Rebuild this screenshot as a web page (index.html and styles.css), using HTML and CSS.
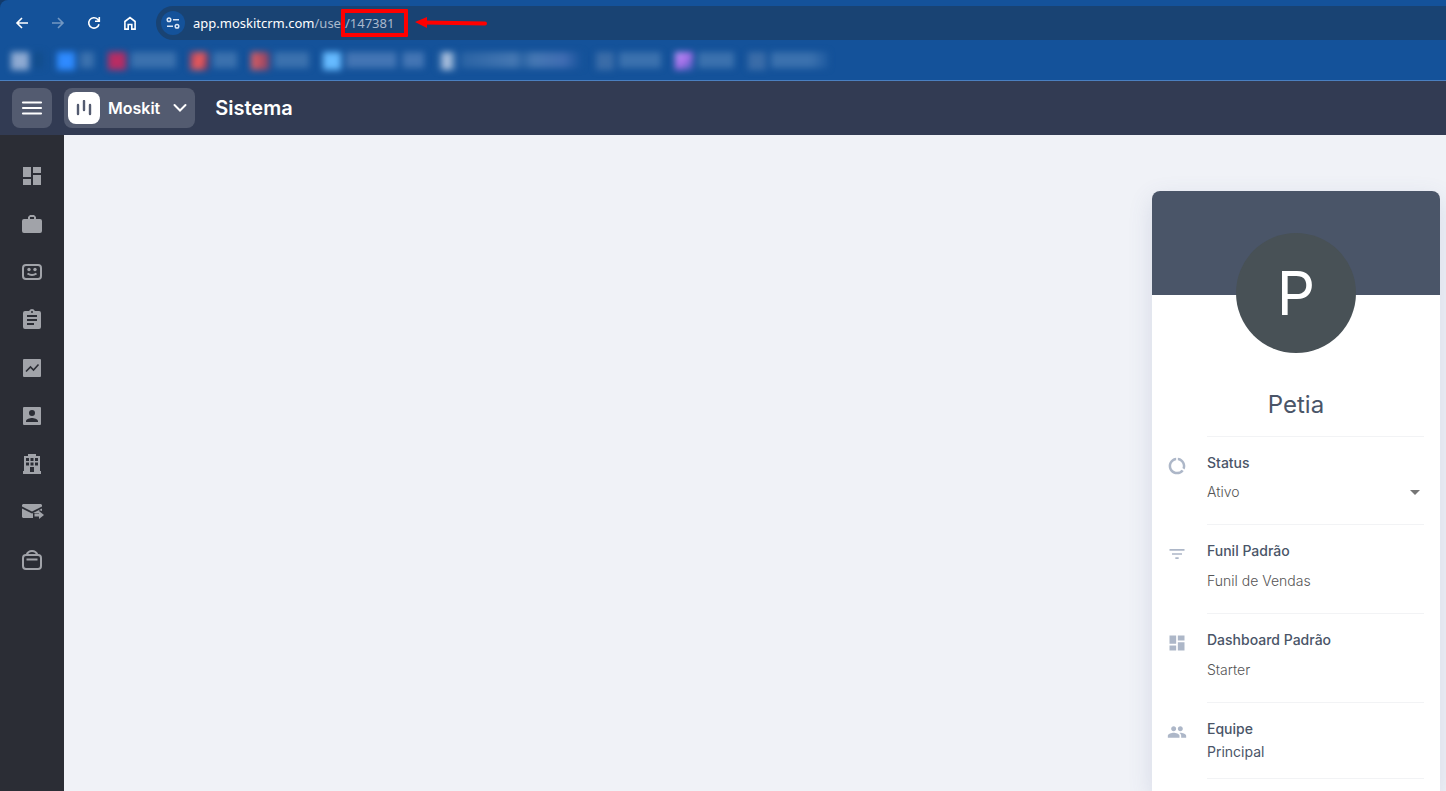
FILE: index.html
```html
<!DOCTYPE html>
<html lang="pt-BR">
<head>
    <meta charset="UTF-8">
    <title>Moskit - Sistema</title>
    <link rel="stylesheet" href="styles.css">
</head>
<body>
    <!-- browser bar -->
    <div class="browser">
        <div class="toolbar">
            <button class="nav-button" aria-label="Back">
                <svg viewBox="0 0 16 16"><path d="M14 8H3M8 3L3 8l5 5"/></svg>
            </button>
            <button class="nav-button disabled" aria-label="Forward" disabled>
                <svg viewBox="0 0 16 16"><path d="M2 8h11M8 3l5 5-5 5"/></svg>
            </button>
            <button class="nav-button" aria-label="Reload">
                <svg viewBox="0 0 16 16"><path d="M13 9.2A5.2 5.2 0 1 1 11.7 4.300L13 5.700M13.300 2v4.200H9"/></svg>
            </button>
            <button class="nav-button" aria-label="Home">
                <svg viewBox="0 0 16 16"><path d="M2.900 6.500L8 2.500l5.100 4v7.600H9.800V9.500H6.200v4.600H2.900z"/></svg>
            </button>
            <div class="address">
                <span class="site-info">
                    <svg viewBox="0 0 16 16"><circle cx="4" cy="4.700" r="1.800"/><path d="M8 4.700h6M2 11.200h6"/><circle cx="12" cy="11.200" r="1.800"/></svg>
                </span>
                <span class="url"><span class="host">app.moskitcrm.com</span>/use</span>
                <span class="user-id">/147381</span>
                <svg class="arrow" viewBox="0 0 74 12"><path class="line" d="M9 5.500l61 1"/><path class="head" d="M0 5L12 0v11z"/></svg>
            </div>
        </div>
        <div class="bookmarks">
            <span class="bookmark b1"><i></i><b></b></span>
            <span class="bookmark b2"><i></i><b></b></span>
            <span class="bookmark b3"><i></i><b></b></span>
            <span class="bookmark b4"><i></i><b></b></span>
            <span class="bookmark b5"><i></i><b></b></span>
            <span class="bookmark b6"><i></i><b></b></span>
            <span class="bookmark b7"><i></i><b></b></span>
            <span class="bookmark b8"><i></i><b></b></span>
            <span class="bookmark b9"><i></i><b></b></span>
            <span class="bookmark b10"><i></i><b></b></span>
        </div>
    </div>

    <header class="header">
        <button class="menu-button" aria-label="Menu">
            <svg viewBox="0 0 24 24"><path d="M3 6.500h18M3 12h18M3 17.500h18"/></svg>
        </button>
        <button class="brand">
            <span class="logo">
                <svg viewBox="0 0 16 16"><path d="M2 5v9M8 1v9M14 5v9"/></svg>
            </span>
            Moskit
            <svg class="chevron" viewBox="0 0 16 16"><path d="M2.500 5L8 10.500 13.500 5"/></svg>
        </button>
        <h1 class="title">Sistema</h1>
    </header>

    <div class="page">
        <nav class="sidebar">
            <a href="#" aria-label="Dashboard"><svg viewBox="0 0 24 24"><path d="M3 13h8V3H3v10zm0 8h8v-6H3v6zm10 0h8V11h-8v10zm0-18v6h8V3h-8z"/></svg></a>
            <a href="#" aria-label="Negócios"><svg viewBox="0 0 24 24"><path d="M20 7h-4V5l-2-2h-4L8 5v2H4a2 2 0 0 0-2 2v10a2 2 0 0 0 2 2h16a2 2 0 0 0 2-2V9a2 2 0 0 0-2-2zM10 7V5h4v2z"/></svg></a>
            <a href="#" aria-label="Contatos"><svg viewBox="0 0 24 24"><rect class="stroke" x="3" y="5" width="18" height="14" rx="3"/><circle cx="9" cy="9.500" r="1.700"/><circle cx="15" cy="9.500" r="1.700"/><path class="stroke" d="M7.500 13.500q4.500 3.200 9 0"/></svg></a>
            <a href="#" aria-label="Atividades"><svg viewBox="0 0 24 24"><path d="M19 3h-4.180C14.400 1.840 13.300 1 12 1s-2.400.84-2.820 2H5a2 2 0 0 0-2 2v14a2 2 0 0 0 2 2h14a2 2 0 0 0 2-2V5a2 2 0 0 0-2-2zm-7 0a1 1 0 1 1 0 2 1 1 0 0 1 0-2zm2 14H7v-2h7v2zm3-4H7v-2h10v2zm0-4H7V7h10v2z"/></svg></a>
            <a href="#" aria-label="Relatórios"><svg viewBox="0 0 24 24"><rect x="3" y="3" width="18" height="18" rx="1"/><path class="cut" d="M6 15.500l4.500-4.500 3 3L18.500 8.500"/></svg></a>
            <a href="#" aria-label="Pessoas"><svg viewBox="0 0 24 24"><path d="M3 4v16a1 1 0 0 0 1 1h16a1 1 0 0 0 1-1V4a1 1 0 0 0-1-1H4a1 1 0 0 0-1 1zm12 5a3 3 0 1 1-6 0 3 3 0 0 1 6 0zm-9 8c0-2 4-3.100 6-3.100s6 1.100 6 3.100v1H6v-1z"/></svg></a>
            <a href="#" aria-label="Empresas"><svg viewBox="0 0 24 24"><path fill-rule="evenodd" d="M8 2h8v2h4v15h1v3H3v-3h1V4h4zM6 6v3h3V6zm4.500 0v3h3V6zM15 6v3h3V6zM6 10.500v3h3v-3zm4.500 0v3h3v-3zm4.500 0v3h3v-3zM10 15v5h4v-5z"/></svg></a>
            <a href="#" aria-label="E-mails"><svg viewBox="0 0 24 24"><path d="M2 5l1-1h18l1 1v1.500l-10 5-10-5zM2 8.500l10 5 10-5V11l-3-1v3h-6v5H3l-1-1zM14.500 13.500H19V11l5 4-5 4v-2.500h-4.500z"/></svg></a>
            <a href="#" aria-label="Loja"><svg viewBox="0 0 24 24"><rect class="stroke" x="3" y="7" width="18" height="14" rx="3"/><path class="stroke" d="M6.500 7Q8 3 12 3t5.500 4M6.500 11.500h11"/></svg></a>
        </nav>

        <main class="content">
            <section class="card">
                <div class="banner">
                    <div class="avatar">P</div>
                </div>
                <h2 class="name">Petia</h2>
                <div class="row status">
                    <svg viewBox="0 0 24 24"><path d="M13 2.050v3.030c3.390.49 6 3.390 6 6.920 0 .9-.18 1.750-.48 2.540l2.600 1.530c.56-1.240.88-2.620.88-4.070 0-5.180-3.950-9.450-9-9.950zM12 19c-3.870 0-7-3.130-7-7 0-3.530 2.610-6.430 6-6.920V2.050c-5.060.5-9 4.760-9 9.950 0 5.520 4.470 10 9.990 10 3.310 0 6.240-1.610 8.060-4.090l-2.600-1.530A6.950 6.950 0 0 1 12 19z"/></svg>
                    <div class="field">
                        <label class="label" for="status">Status</label>
                        <div class="select-box">
                            <select class="value" id="status">
                                <option>Ativo</option>
                                <option>Inativo</option>
                            </select>
                        </div>
                    </div>
                </div>
                <div class="row">
                    <svg viewBox="0 0 24 24"><path d="M10 18h4v-2h-4v2zM3 6v2h18V6H3zm3 7h12v-2H6v2z"/></svg>
                    <div class="field">
                        <div class="label">Funil Padrão</div>
                        <div class="value">Funil de Vendas</div>
                    </div>
                </div>
                <div class="row">
                    <svg viewBox="0 0 24 24"><path d="M3 13h8V3H3v10zm0 8h8v-6H3v6zm10 0h8V11h-8v10zm0-18v6h8V3h-8z"/></svg>
                    <div class="field">
                        <div class="label">Dashboard Padrão</div>
                        <div class="value">Starter</div>
                    </div>
                </div>
                <div class="row team">
                    <svg viewBox="0 0 24 24"><path d="M16 11c1.660 0 2.990-1.340 2.990-3S17.660 5 16 5s-3 1.340-3 3 1.340 3 3 3zm-8 0c1.660 0 2.990-1.340 2.990-3S9.660 5 8 5 5 6.340 5 8s1.340 3 3 3zm0 2c-2.330 0-7 1.170-7 3.500V19h14v-2.500C15 14.170 10.330 13 8 13zm8 0c-.29 0-.62.020-.97.050 1.160.84 1.970 1.970 1.970 3.450V19h6v-2.500c0-2.330-4.670-3.500-7-3.500z"/></svg>
                    <div class="field">
                        <div class="label">Equipe</div>
                        <div class="value">Principal</div>
                    </div>
                </div>
            </section>
        </main>
    </div>
</body>
</html>
```
FILE: styles.css
```css
* {
    box-sizing: border-box;
}

body {
    margin: 0;
    height: 100vh;
    display: flex;
    flex-direction: column;
    overflow: hidden;
    font-family: Inter, "Liberation Sans", sans-serif;
    font-size: 14px;
    color: #4a5568;
    background-color: #123a6b;
}

button {
    border: none;
    padding: 0;
    background: none;
    font-family: inherit;
    cursor: pointer;
}

svg {
    display: block;
    flex-shrink: 0;
}

/* browser bar */
.browser {
    flex-shrink: 0;
    height: 81px;
    background-color: #14529a;
    border-bottom: 1px solid #4a7fc0;
    border-top-left-radius: 8px;
}

.toolbar {
    display: flex;
    align-items: center;
    padding: 6px 0 0 4px;
}

.nav-button {
    width: 36px;
    height: 34px;
    display: flex;
    align-items: center;
    justify-content: center;
}

.nav-button svg {
    width: 16px;
    height: 16px;
    fill: none;
    stroke: #fff;
    stroke-width: 1.6;
}

.nav-button.disabled {
    opacity: 0.4;
}

.address {
    flex: 1;
    height: 34px;
    margin-left: 8px;
    padding-left: 5px;
    display: flex;
    align-items: center;
    background-color: #194373;
    border-radius: 17px 0 0 17px;
    font-family: "Noto Sans", sans-serif;
    font-size: 13px;
    color: #a9b9cd;
}

.site-info {
    width: 24px;
    height: 24px;
    margin-right: 8px;
    display: flex;
    align-items: center;
    justify-content: center;
    background-color: #14529a;
    border-radius: 50%;
}

.site-info svg {
    width: 16px;
    height: 16px;
    fill: none;
    stroke: #dbe6f5;
    stroke-width: 1.5;
}

.host {
    color: #fff;
}

.user-id {
    height: 28px;
    padding-right: 10px;
    display: flex;
    align-items: center;
    border: 4px solid #f00;
    border-radius: 1px;
}

.arrow {
    width: 74px;
    height: 12px;
    margin-left: 7px;
}

.arrow .line {
    stroke: #f00;
    stroke-width: 4;
    stroke-linecap: round;
}

.arrow .head {
    fill: #f00;
}

.bookmarks {
    display: flex;
    gap: 14px;
    padding: 12px 11px;
}

.bookmark {
    display: flex;
    gap: 5px;
    filter: blur(3px);
}

.bookmark i {
    width: 18px;
    height: 18px;
    background-color: #3a6ca8;
}

.bookmark b {
    height: 16px;
    background-color: #3b71ae;
}

.b1 i { background-color: #8fabd2; }
.b1 b { width: 9px; background-color: #124d8c; }
.b2 i { background-color: #2f8bff; }
.b2 b { width: 14px; }
.b3 i { background-color: #b82d63; }
.b3 b { width: 45px; }
.b4 i { background: linear-gradient(100deg, #a04060, #f5605b 55%, #6b2d5c); }
.b4 b { width: 24px; }
.b5 i { background: linear-gradient(90deg, #df6062, #8c4264); }
.b5 b { width: 35px; }
.b6 i { background-color: #66bbff; }
.b6 b { width: 78px; background: linear-gradient(90deg, #4375b4 50px, #14529a 51px, #14529a 56px, #4375b4 57px); }
.b7 i { background: linear-gradient(90deg, #14529a, #c8d6ea 45%, #3b71ae); }
.b7 b { width: 121px; background: linear-gradient(90deg, #2a63a4, #4678b3 45%, #2a63a4 50%, #4678b3 60%, #3f6cb2 85%, #14529a); }
.b8 b { width: 42px; }
.b9 i { background: linear-gradient(135deg, #c49cff, #a56fe8 50%, #3f60b8); }
.b9 b { width: 36px; }
.b10 b { width: 57px; background: linear-gradient(90deg, #3b71ae 70%, #1e5aa0); }

/* app header */
.header {
    flex-shrink: 0;
    height: 54px;
    padding: 0 12px;
    display: flex;
    align-items: center;
    gap: 12px;
    background-color: #323b53;
    color: #fff;
}

.menu-button {
    width: 40px;
    height: 40px;
    display: flex;
    align-items: center;
    justify-content: center;
    background-color: #535b70;
    border-radius: 8px;
}

.menu-button svg {
    width: 24px;
    height: 24px;
    stroke: #fff;
    stroke-width: 2.2;
    stroke-linecap: round;
}

.brand {
    height: 40px;
    padding: 0 7px 0 4px;
    display: flex;
    align-items: center;
    gap: 8px;
    background-color: #535b70;
    border-radius: 8px;
    color: #fff;
    font-size: 16px;
    font-weight: 600;
}

.logo {
    width: 32px;
    height: 32px;
    display: flex;
    align-items: center;
    justify-content: center;
    background-color: #fff;
    border-radius: 8px;
}

.logo svg {
    width: 16px;
    height: 16px;
    stroke: #535b70;
    stroke-width: 2.4;
    stroke-linecap: round;
}

.chevron {
    width: 16px;
    height: 16px;
    margin-left: 4px;
    fill: none;
    stroke: #fff;
    stroke-width: 2;
    stroke-linecap: round;
}

.title {
    margin: 0 8px;
    font-size: 20px;
    font-weight: 600;
}

/* page */
.page {
    flex: 1;
    min-height: 0;
    display: flex;
}

.sidebar {
    width: 64px;
    padding-top: 17px;
    background-color: #2b2d35;
}

.sidebar a {
    height: 48px;
    display: flex;
    align-items: center;
    justify-content: center;
}

.sidebar svg {
    width: 24px;
    height: 24px;
    fill: #a1a3a9;
}

.sidebar .stroke {
    fill: none;
    stroke: #a1a3a9;
    stroke-width: 2;
}

.sidebar .cut {
    fill: none;
    stroke: #2b2d35;
    stroke-width: 1.6;
}

.content {
    flex: 1;
    display: flex;
    justify-content: flex-end;
    padding: 56px 6px 0 0;
    background-color: #f0f2f7;
}

.card {
    width: 288px;
    background-color: #fff;
    border-radius: 8px 8px 0 0;
    box-shadow: 0 8px 24px rgba(74, 96, 150, 0.16);
}

.banner {
    height: 104px;
    padding-top: 42px;
    background-color: #4a5568;
    border-radius: 8px 8px 0 0;
}

.avatar {
    width: 120px;
    height: 120px;
    margin: 0 auto;
    background-color: #485156;
    border-radius: 50%;
    color: #fff;
    font-size: 60px;
    line-height: 120px;
    text-align: center;
}

.name {
    margin: 94px 0 16px;
    font-size: 24px;
    font-weight: 400;
    line-height: 31px;
    text-align: center;
}

.row {
    display: flex;
    gap: 20px;
    padding: 0 16px 0 15px;
}

.row svg {
    width: 20px;
    height: 20px;
    margin-top: 20px;
    fill: #adb7c8;
}

.field {
    flex: 1;
    height: 89px;
    padding-top: 16px;
    border-top: 1px solid #f2f3f5;
}

.label {
    display: block;
    font-size: 14px;
    font-weight: 500;
    line-height: 20px;
}

.value {
    margin-top: 10px;
    color: #555;
    font-weight: 300;
    line-height: 20px;
}

.select-box {
    position: relative;
}

.select-box::after {
    content: "";
    position: absolute;
    right: 4px;
    top: 17px;
    border: 5px solid transparent;
    border-top-color: #757575;
    border-bottom: none;
    pointer-events: none;
}

select.value {
    width: 100%;
    padding: 0;
    border: none;
    background: none;
    appearance: none;
    font-family: inherit;
    font-size: 14px;
}

.status .field {
    height: 88px;
}

.status .value {
    margin-top: 9px;
}

.team .field {
    height: 77px;
    border-bottom: 1px solid #f2f3f5;
}

.team .value {
    margin-top: 3px;
    color: #4a5568;
    font-weight: 400;
}
```
